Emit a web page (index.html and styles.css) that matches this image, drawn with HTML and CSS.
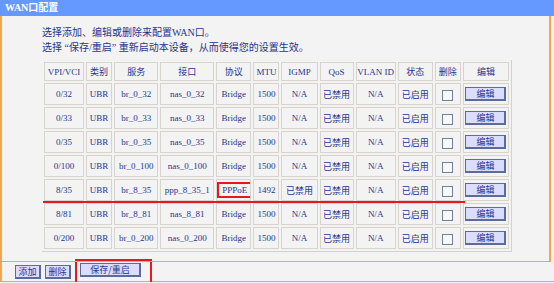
FILE: index.html
```html
<!DOCTYPE html>
<html lang="zh-CN">
<head>
    <meta charset="UTF-8">
    <title>WAN口配置</title>
    <link rel="stylesheet" href="styles.css">
</head>
<body>
    <div class="title-bar">WAN口配置</div>
    <div class="panel">
        <div class="intro">
            <p>选择添加、编辑或删除来配置WAN口。</p>
            <p>选择 “保存/重启” 重新启动本设备，从而使得您的设置生效。</p>
        </div>
        <table class="wan-table">
            <colgroup>
                <col style="width:40px"><col style="width:26px"><col style="width:44px"><col style="width:54px">
                <col style="width:35px"><col style="width:26px"><col style="width:36px"><col style="width:34px">
                <col style="width:40px"><col style="width:35px"><col style="width:26px"><col style="width:46px">
            </colgroup>
            <tr class="head">
                <td>VPI/VCI</td><td>类别</td><td>服务</td><td>接口</td><td>协议</td><td>MTU</td>
                <td>IGMP</td><td>QoS</td><td>VLAN ID</td><td>状态</td><td>删除</td><td>编辑</td>
            </tr>
            <tr>
                <td>0/32</td><td>UBR</td><td>br_0_32</td><td>nas_0_32</td><td>Bridge</td><td>1500</td>
                <td>N/A</td><td>已禁用</td><td>N/A</td><td>已启用</td>
                <td><input type="checkbox" class="chk"></td><td><button class="btn btn-edit">编辑</button></td>
            </tr>
            <tr>
                <td>0/33</td><td>UBR</td><td>br_0_33</td><td>nas_0_33</td><td>Bridge</td><td>1500</td>
                <td>N/A</td><td>已禁用</td><td>N/A</td><td>已启用</td>
                <td><input type="checkbox" class="chk"></td><td><button class="btn btn-edit">编辑</button></td>
            </tr>
            <tr>
                <td>0/35</td><td>UBR</td><td>br_0_35</td><td>nas_0_35</td><td>Bridge</td><td>1500</td>
                <td>N/A</td><td>已禁用</td><td>N/A</td><td>已启用</td>
                <td><input type="checkbox" class="chk"></td><td><button class="btn btn-edit">编辑</button></td>
            </tr>
            <tr>
                <td>0/100</td><td>UBR</td><td>br_0_100</td><td>nas_0_100</td><td>Bridge</td><td>1500</td>
                <td>N/A</td><td>已禁用</td><td>N/A</td><td>已启用</td>
                <td><input type="checkbox" class="chk"></td><td><button class="btn btn-edit">编辑</button></td>
            </tr>
            <tr>
                <td>8/35</td><td>UBR</td><td>br_8_35</td><td>ppp_8_35_1</td><td><span class="mark">PPPoE</span></td><td>1492</td>
                <td>已禁用</td><td>已禁用</td><td>N/A</td><td>已启用</td>
                <td><input type="checkbox" class="chk"></td><td><button class="btn btn-edit">编辑</button></td>
            </tr>
            <tr>
                <td>8/81</td><td>UBR</td><td>br_8_81</td><td>nas_8_81</td><td>Bridge</td><td>1500</td>
                <td>N/A</td><td>已禁用</td><td>N/A</td><td>已启用</td>
                <td><input type="checkbox" class="chk"></td><td><button class="btn btn-edit">编辑</button></td>
            </tr>
            <tr>
                <td>0/200</td><td>UBR</td><td>br_0_200</td><td>nas_0_200</td><td>Bridge</td><td>1500</td>
                <td>N/A</td><td>已禁用</td><td>N/A</td><td>已启用</td>
                <td><input type="checkbox" class="chk"></td><td><button class="btn btn-edit">编辑</button></td>
            </tr>
        </table>
        <!-- красная линия-пометка под строкой 8/35 -->
        <div class="underline"></div>
    </div>
    <div class="footer">
        <button class="btn">添加</button>
        <button class="btn">删除</button>
        <span class="mark-box"><button class="btn btn-save">保存/重启</button></span>
    </div>
</body>
</html>
```

FILE: styles.css
```css
body {
    margin: 0;
    background: #f3f3f3;
    font-family: "Liberation Serif", "Noto Sans CJK SC", serif;
    font-size: 10px;
    color: #1f3690;
    width: 554px;
}
.title-bar {
    height: 16px;
    line-height: 16px;
    background: #6699ff;
    color: #fff;
    font-weight: bold;
    font-size: 10px;
    padding-left: 5px;
}
.panel {
    position: relative;
    width: 547px;
    height: 245px;
    border-left: 2px solid #f6a54c;
    border-right: 2px solid #f6a54c;
    border-bottom: 1px solid #f6a54c;
}
.intro {
    padding: 10px 0 0 40px;
}
.intro p {
    margin: 0;
    line-height: 14.5px;
    font-size: 10px;
}
.wan-table {
    margin: 5px 0 0 40px;
    width: 470px;
    table-layout: fixed;
    border-collapse: separate;
    border-spacing: 2px;
    border-right: 1px solid #d2d2d2;
    border-bottom: 1px solid #d2d2d2;
    font-size: 9px;
}
.wan-table td {
    height: 20px;
    padding: 0;
    text-align: center;
    border: 1px solid #d6d4cc;
    white-space: nowrap;
    overflow: hidden;
}
.wan-table tr.head td {
    height: 17px;
}
.mark {
    display: inline-block;
    border: 2px solid #e8181c;
    padding: 0 3px;
    line-height: 12px;
}
.chk {
    appearance: none;
    -webkit-appearance: none;
    width: 11px;
    height: 11px;
    margin: 3px 0 0;
    border: 1px solid #6e7f96;
    background: #f8f8f8;
    vertical-align: top;
}
.btn {
    font-family: "Noto Sans CJK SC", sans-serif;
    font-size: 9px;
    color: #1f3690;
    background: #dcdcfe;
    border: 1px solid #5a6c9c;
    border-right-width: 2px;
    border-bottom-width: 2px;
    padding: 0;
    height: 14px;
    line-height: 11px;
    vertical-align: middle;
}
.btn-edit {
    width: 41px;
}
.underline {
    position: absolute;
    left: 41px;
    top: 185px;
    width: 422px;
    height: 2px;
    background: #e8181c;
}
.footer {
    width: 547px;
    height: 19px;
    border-left: 2px solid #f6a54c;
    border-right: 2px solid #f6a54c;
    border-bottom: 1px solid #f6a54c;
    padding-left: 13px;
    box-sizing: content-box;
    display: flex;
    align-items: center;
    gap: 4px;
}
.footer .btn {
    width: 26px;
}
.footer .mark-box {
    border: 2px solid #e8181c;
    padding: 2px 9px 5px 3px;
}
.footer .btn-save {
    width: 61px;
}
```
